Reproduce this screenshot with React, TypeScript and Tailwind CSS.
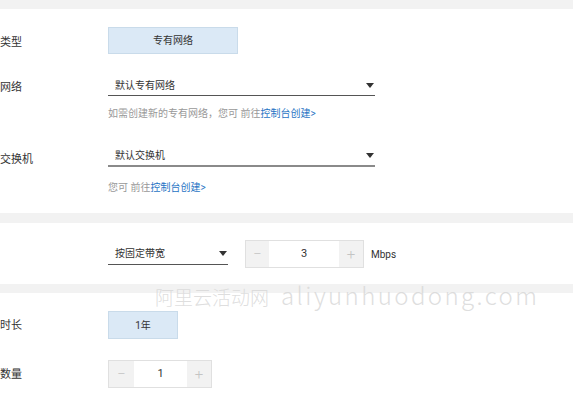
import React from 'react';

const font = { fontFamily: 'Roboto, "Noto Sans CJK SC", sans-serif' };

const Caret = () => (
  <svg width="8" height="5" viewBox="0 0 8 5" className="shrink-0">
    <path d="M0 0 L8 0 L4 5 Z" fill="#333" />
  </svg>
);

const Select = ({ text, width, line }: { text: string; width: string; line: string }) => (
  <div className={`flex h-[21px] items-center justify-between pl-[7px] pr-[1px] ${width} ${line}`}>
    <span className="text-[10px] text-[#333]">{text}</span>
    <Caret />
  </div>
);

const Stepper = ({ value, widths }: { value: string; widths: [string, string, string] }) => (
  <div className="flex h-[28px] border border-[#e0e0e0]">
    <div className={`flex items-center justify-center bg-[#f2f2f2] text-[15px] font-light text-[#c4c4c4] ${widths[0]}`}>−</div>
    <div className={`flex items-center justify-center bg-white text-[11px] text-[#333] ${widths[1]}`}>{value}</div>
    <div className={`flex items-center justify-center bg-[#f2f2f2] text-[15px] font-light text-[#c4c4c4] ${widths[2]}`}>+</div>
  </div>
);

const Label = ({ children, className = '' }: { children: React.ReactNode; className?: string }) => (
  <div className={`w-[108px] shrink-0 text-[11px] text-[#333] ${className}`}>{children}</div>
);

export default function App() {
  return (
    <div className="relative h-[400px] w-[573px] overflow-hidden bg-white" style={font}>
      <div className="h-[9px] bg-[#f2f2f2]" />

      {/* network section */}
      <div className="pb-[18px] pt-[18px]">
        <div className="flex items-center">
          <Label className="pt-[6px]">类型</Label>
          <div className="flex h-[27px] w-[130px] items-center justify-center border border-[#c9dbea] bg-[#dbe9f6] text-[10px] text-[#333]">
            专有网络
          </div>
        </div>

        <div className="mt-[21px] flex items-center">
          <Label className="pt-[5px]">网络</Label>
          <Select text="默认专有网络" width="w-[267px]" line="border-b border-[#555]" />
        </div>
        <div className="ml-[108px] mt-[10px] text-[10px] leading-[14px] text-[#999]">
          如需创建新的专有网络，您可 前往<span className="text-[#1f74c4]">控制台创建&gt;</span>
        </div>

        <div className="mt-[24px] flex items-center">
          <Label className="pt-[7px]">交换机</Label>
          <Select text="默认交换机" width="w-[267px]" line="border-b-2 border-[#8a8a8a]" />
        </div>
        <div className="ml-[108px] mt-[13px] text-[10px] leading-[14px] text-[#999]">
          您可 前往<span className="text-[#1f74c4]">控制台创建&gt;</span>
        </div>
      </div>

      <div className="h-[10px] bg-[#f2f2f2]" />

      {/* bandwidth section */}
      <div className="flex items-center pb-[16px] pl-[108px] pt-[17px]">
        <Select text="按固定带宽" width="w-[120px]" line="border-b border-[#555]" />
        <div className="ml-[17px]">
          <Stepper value="3" widths={['w-[23px]', 'w-[70px]', 'w-[24px]']} />
        </div>
        <span className="ml-[7px] text-[10px] text-[#333]">Mbps</span>
      </div>

      <div className="h-[9px] bg-[#f2f2f2]" />

      {/* duration section */}
      <div className="pt-[18px]">
        <div className="flex items-center">
          <Label className="pt-[2px]">时长</Label>
          <div className="flex h-[28px] w-[70px] items-center justify-center border border-[#c9dbea] bg-[#dbe9f6] text-[10px] text-[#333]">
            1年
          </div>
        </div>
        <div className="mt-[21px] flex items-center">
          <Label className="pt-[2px]">数量</Label>
          <Stepper value="1" widths={['w-[25px]', 'w-[53px]', 'w-[24px]']} />
        </div>
      </div>

      {/* watermark */}
      <div
        className="pointer-events-none absolute left-[155px] top-[277px] flex items-baseline whitespace-nowrap font-light text-[#d6d6d6]/80"
        style={{ fontFamily: '"Noto Sans CJK SC", "Noto Sans", sans-serif' }}
      >
        <span className="text-[19px]">阿里云活动网</span>
        <span className="ml-[12px] text-[24px] tracking-[2.4px]">aliyunhuodong.com</span>
      </div>
    </div>
  );
}
